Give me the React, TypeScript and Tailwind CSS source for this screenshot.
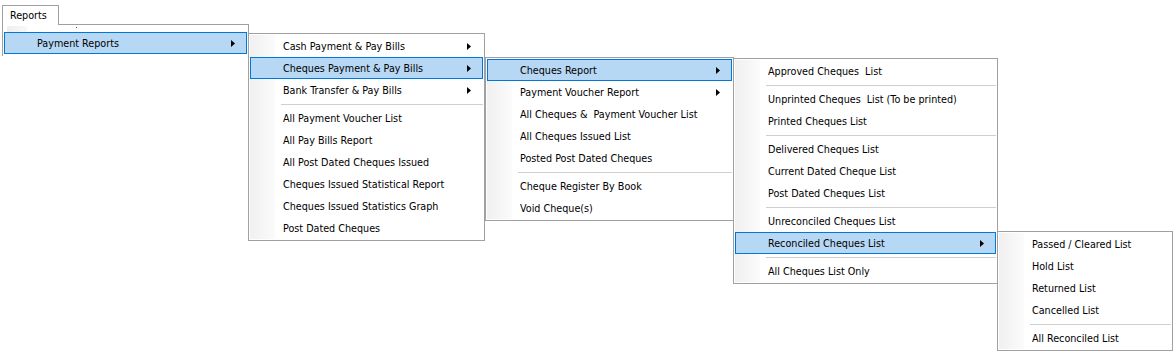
import React from "react";

type Item = { label: string; sub?: boolean; hl?: boolean } | "sep";

const FONT = { fontFamily: '"DejaVu Sans Condensed", "DejaVu Sans", sans-serif' };

function Arrow() {
  return (
    <svg width="4" height="7" viewBox="0 0 4 7" className="absolute right-[11px] top-[7px]">
      <polygon points="0,0 4,3.5 0,7" fill="#000" />
    </svg>
  );
}

function MenuRow({ it }: { it: Item }) {
  if (it === "sep") {
    return (
      <div className="h-[6px] flex items-center ml-[31px]">
        <div className="h-px w-full bg-[#cfcfcf]" />
      </div>
    );
  }
  return (
    <div
      className={
        "relative h-[22px] flex items-center pl-[32px] pt-[2px] border text-[10.7px] text-black whitespace-pre " +
        (it.hl ? "border-[#0078d7] bg-[#b7d8f4]" : "border-transparent")
      }
    >
      <span className="leading-none">{it.label}</span>
      {it.sub && <Arrow />}
    </div>
  );
}

function Menu({ left, top, width, items }: { left: number; top: number; width: number; items: Item[] }) {
  return (
    <div
      className="absolute border border-[#a0a0a0] bg-white p-px"
      style={{ left, top, width }}
    >
      <div className="absolute left-px top-px bottom-px w-[25px] bg-gradient-to-r from-[#f0f0f0] to-[#fbfbfb]" />
      <div className="relative flex flex-col">
        {items.map((it, i) => (
          <MenuRow key={i} it={it} />
        ))}
      </div>
    </div>
  );
}

export default function App() {
  const m2: Item[] = [
    { label: "Cash Payment & Pay Bills", sub: true },
    { label: "Cheques Payment & Pay Bills", sub: true, hl: true },
    { label: "Bank Transfer & Pay Bills", sub: true },
    "sep",
    { label: "All Payment Voucher List" },
    { label: "All Pay Bills Report" },
    { label: "All Post Dated Cheques Issued" },
    { label: "Cheques Issued Statistical Report" },
    { label: "Cheques Issued Statistics Graph" },
    { label: "Post Dated Cheques" },
  ];
  const m3: Item[] = [
    { label: "Cheques Report", sub: true, hl: true },
    { label: "Payment Voucher Report", sub: true },
    { label: "All Cheques &  Payment Voucher List" },
    { label: "All Cheques Issued List" },
    { label: "Posted Post Dated Cheques" },
    "sep",
    { label: "Cheque Register By Book" },
    { label: "Void Cheque(s)" },
  ];
  const m4: Item[] = [
    { label: "Approved Cheques  List" },
    "sep",
    { label: "Unprinted Cheques  List (To be printed)" },
    { label: "Printed Cheques List" },
    "sep",
    { label: "Delivered Cheques List" },
    { label: "Current Dated Cheque List" },
    { label: "Post Dated Cheques List" },
    "sep",
    { label: "Unreconciled Cheques List" },
    { label: "Reconciled Cheques List", sub: true, hl: true },
    "sep",
    { label: "All Cheques List Only" },
  ];
  const m5: Item[] = [
    { label: "Passed / Cleared List" },
    { label: "Hold List" },
    { label: "Returned List" },
    { label: "Cancelled List" },
    "sep",
    { label: "All Reconciled List" },
  ];

  return (
    <div className="relative w-[1176px] h-[361px] bg-white overflow-hidden" style={FONT}>
      {/* Tab + first menu */}
      <div className="absolute left-[2px] top-[5px] w-[247px] flex flex-col">
        <div className="relative z-10 w-[57px] h-[20px] -mb-px border border-b-0 border-[#a0a0a0] bg-white flex items-center pl-[7px] pt-[2px] text-[10.7px] text-black">
          Reports
        </div>
        <div className="relative h-[32px] border-l border-t border-r border-[#a0a0a0] bg-white px-px pt-[7px]">
          <div className="absolute left-[4px] top-[1px] w-[20px] h-[6px] bg-gradient-to-r from-[#eeeeee] to-[#f8f8f8]" />
          <div className="absolute left-[73px] top-[2px] w-px h-px bg-[#555]" />
          <MenuRow it={{ label: "Payment Reports", sub: true, hl: true }} />
        </div>
      </div>

      <Menu left={248} top={33} width={237} items={m2} />
      <Menu left={485} top={57} width={249} items={m3} />
      <Menu left={733} top={58} width={265} items={m4} />
      <Menu left={997} top={231} width={176} items={m5} />
    </div>
  );
}
